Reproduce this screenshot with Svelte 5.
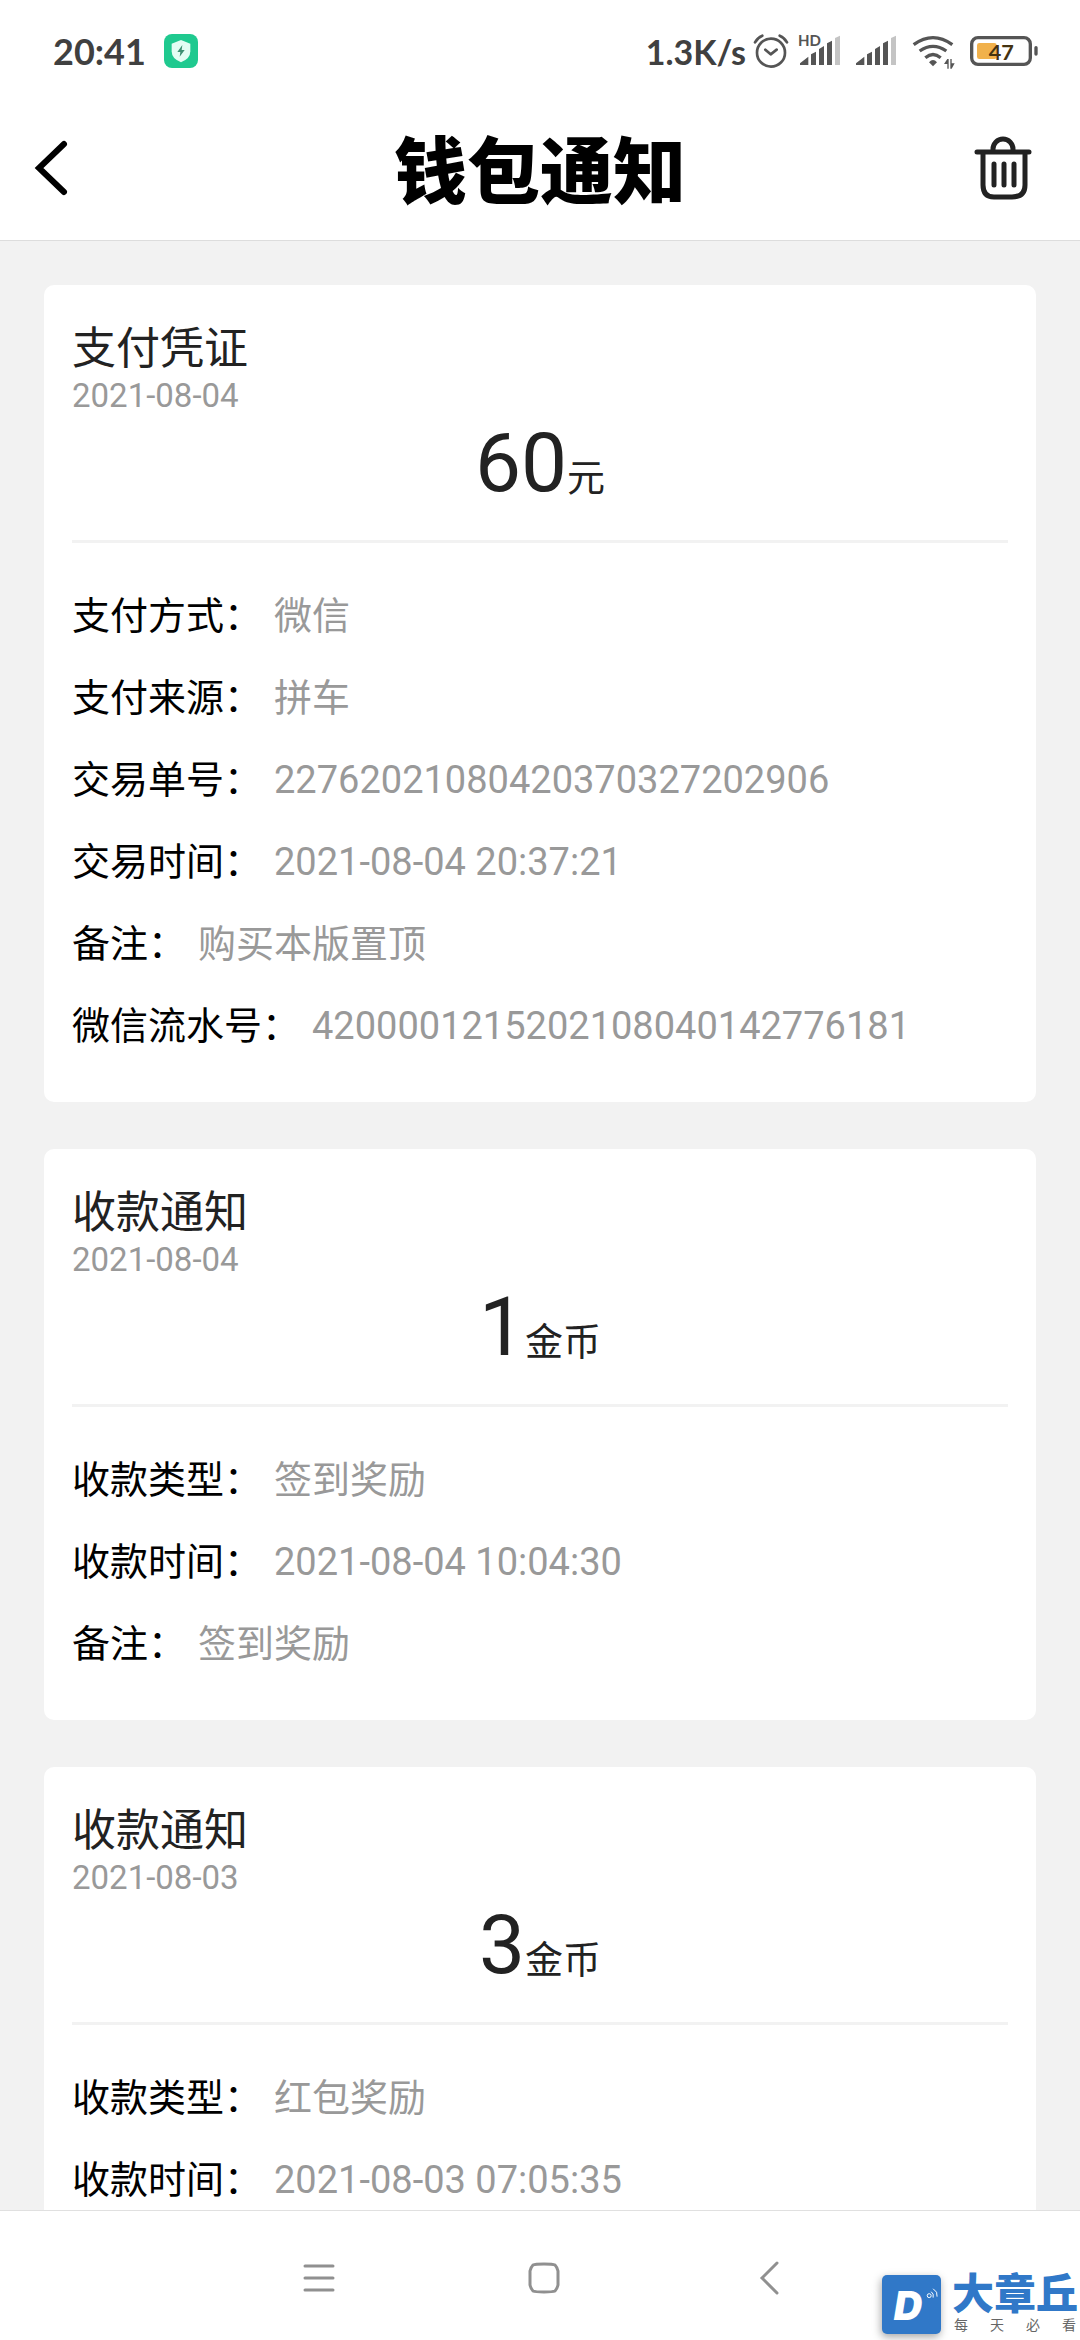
<script lang="ts">
	type Row = { label: string; value: string };
	type Notice = {
		title: string;
		date: string;
		amount: string;
		unit: string;
		rows: Row[];
	};

	const speed = '1.3K/s';
	const time = '20:41';
	const battery = 47;

	let notices: Notice[] = $state([
		{
			title: '支付凭证',
			date: '2021-08-04',
			amount: '60',
			unit: '元',
			rows: [
				{ label: '支付方式', value: '微信' },
				{ label: '支付来源', value: '拼车' },
				{ label: '交易单号', value: '22762021080420370327202906' },
				{ label: '交易时间', value: '2021-08-04 20:37:21' },
				{ label: '备注', value: '购买本版置顶' },
				{ label: '微信流水号', value: '4200001215202108040142776181' }
			]
		},
		{
			title: '收款通知',
			date: '2021-08-04',
			amount: '1',
			unit: '金币',
			rows: [
				{ label: '收款类型', value: '签到奖励' },
				{ label: '收款时间', value: '2021-08-04 10:04:30' },
				{ label: '备注', value: '签到奖励' }
			]
		},
		{
			title: '收款通知',
			date: '2021-08-03',
			amount: '3',
			unit: '金币',
			rows: [
				{ label: '收款类型', value: '红包奖励' },
				{ label: '收款时间', value: '2021-08-03 07:05:35' }
			]
		}
	]);

	const clearAll = () => {
		notices = [];
	};
	const goBack = () => {
		history.back();
	};
</script>

{#snippet signal(hd: boolean)}
	<svg class="signal" viewBox="0 0 126 108">
		{#if hd}
			<text x="-6" y="38">HD</text>
		{/if}
		<path d="M0 91 25 71V96H0zM33 64 48 56V96H33zM57 48 72 39V96H57zM81 31 96 23V96H81z" />
		<path class="weak" d="M105 15 120 8V96H105z" />
	</svg>
{/snippet}

<div class="screen" lang="zh-CN">
	<div class="status">
		<div class="status_left">
			<span>{time}</span>
			<svg class="guard" viewBox="0 0 102 102">
				<rect width="102" height="102" rx="24" fill="#1fc98f" />
				<path d="M51 18 79 29V52Q79 74 51 85 23 74 23 52V29z" fill="#e4fdf3" />
				<path d="M55 33 40 54H49L47 68 62 48H53z" fill="#3f8f72" />
			</svg>
		</div>
		<div class="status_right">
			<span class="status_speed">{speed}</span>
			<div class="status_icons">
				<svg class="alarm" viewBox="0 0 102 108">
					<circle cx="57" cy="59" r="42" />
					<path d="M40 50 56 64 74 50M9 28Q16 14 31 8M83 8Q98 14 105 28" />
				</svg>
				{@render signal(true)}
				{@render signal(false)}
				<svg class="wifi" viewBox="0 0 132 108">
					<path class="arc" d="M5 35Q63 -7 121 35M23 54Q63 26 103 54M40 74Q63 55 86 74" />
					<path d="M51 88Q63 74 75 88L63 100z" />
					<path d="M106 78H110V107H106V93H96zM115 78H119V91H128L119 107H115z" />
				</svg>
				<svg class="battery" viewBox="0 0 204 108">
					<rect class="shell" x="5" y="14" width="176" height="80" rx="19" />
					<rect x="21" y="30" width="59" height="48" rx="7" fill="#f1b14b" />
					<rect x="193" y="39" width="10" height="29" rx="5" fill="#555" />
					<text x="56" y="81">{battery}</text>
				</svg>
			</div>
		</div>
	</div>

	<header class="header">
		<button class="header_back" aria-label="返回" onclick={goBack}>
			<svg width="32" height="54" viewBox="0 0 32 54">
				<path d="M28 3 3 27 28 51" />
			</svg>
		</button>
		<h1>钱包通知</h1>
		<button class="header_clear" aria-label="清空" onclick={clearAll}>
			<svg width="58" height="64" viewBox="0 0 58 64">
				<path d="M3 16H55M19 16V13A10 10 0 0 1 39 13V16" />
				<path d="M9 17V49Q9 61 20 61H38Q51 61 51 49V17" />
				<path d="M20 28V49M30 28V49M40 28V49" />
			</svg>
		</button>
	</header>

	<main class="list">
		{#each notices as notice}
			<article class="card">
				<h2>{notice.title}</h2>
				<time datetime={notice.date}>{notice.date}</time>
				<p class="amount">{notice.amount}<span>{notice.unit}</span></p>
				<dl>
					{#each notice.rows as row}
						<div class="row">
							<dt>{row.label}：</dt>
							<dd>{row.value}</dd>
						</div>
					{/each}
				</dl>
			</article>
		{/each}
	</main>

	<nav class="nav">
		<button aria-label="任务">
			<svg width="34" height="34" viewBox="0 0 34 34"><path d="M3 5H31M3 17H31M3 29H31" /></svg>
		</button>
		<button aria-label="主页">
			<svg width="34" height="34" viewBox="0 0 34 34">
				<path d="M17 3Q26 3 28 4 30 6 31 10V24Q30 28 28 30 26 31 17 31 8 31 6 30 4 28 3 24V10Q4 6 6 4 8 3 17 3z" />
			</svg>
		</button>
		<button aria-label="返回">
			<svg width="34" height="34" viewBox="0 0 34 34"><path d="M25 2 10 17 25 32" /></svg>
		</button>
	</nav>

	<div class="brand">
		<svg class="brand_logo" viewBox="0 0 60 60">
			<text x="12" y="46">D</text>
			<circle cx="48" cy="21" r="2" />
			<path d="M50 17Q53 19 52 23M52 14Q57 17 56 22" />
		</svg>
		<div class="brand_text">
			<strong>大章丘</strong>
			<div class="brand_slogan">
				{#each '每天必看' as char}
					<span>{char}</span>
				{/each}
			</div>
		</div>
	</div>
</div>

<style>
	:global(body) {
		margin: 0;
	}
	.screen {
		position: relative;
		display: flex;
		flex-direction: column;
		height: 100vh;
		overflow: hidden;
		background-color: #f2f2f2;
		color: #222;
		font-family: Roboto, 'Noto Sans CJK SC', sans-serif;
	}
	h1,
	h2,
	p,
	dl,
	dd {
		margin: 0;
	}
	button {
		display: flex;
		align-items: center;
		padding: 0;
		border: none;
		background: none;
		cursor: pointer;
	}
	svg {
		display: block;
		fill: none;
		overflow: visible;
	}

	.status {
		display: flex;
		flex-shrink: 0;
		justify-content: space-between;
		align-items: center;
		height: 102px;
		padding: 0 42px 0 53px;
		background-color: white;
		color: #404040;
		font-family: Lato, sans-serif;
		font-size: 36px;
		font-weight: 700;
	}
	.status_left {
		display: flex;
		align-items: center;
		gap: 18px;
	}
	.status_right {
		display: flex;
		align-items: center;
		gap: 6px;
	}
	.status_speed {
		font-size: 34px;
	}
	.status_icons {
		display: flex;
		align-items: center;
		gap: 14px;
	}
	.status_icons svg {
		height: 36px;
	}
	.guard {
		width: 34px;
		height: 34px;
	}
	.alarm {
		width: 34px;
		stroke: #555;
		stroke-width: 8;
		stroke-linecap: round;
		stroke-linejoin: round;
	}
	.signal {
		width: 42px;
		fill: #555;
		font-size: 45px;
	}
	.signal .weak {
		fill: #c4c4c4;
	}
	.wifi {
		width: 44px;
		fill: #555;
	}
	.wifi .arc {
		fill: none;
		stroke: #555;
		stroke-width: 10;
	}
	.battery {
		width: 68px;
		fill: #443311;
		font-size: 65px;
	}
	.battery .shell {
		fill: none;
		stroke: #555;
		stroke-width: 10;
	}

	.header {
		display: grid;
		flex-shrink: 0;
		grid-template-columns: 1fr auto 1fr;
		align-items: center;
		height: 132px;
		padding: 0 36px 6px;
		border-bottom: 1px solid #ddd;
		background-color: white;
	}
	.header h1 {
		padding-top: 10px;
		color: black;
		font-size: 73px;
		font-weight: 900;
		line-height: 100px;
	}
	.header_back {
		justify-self: start;
	}
	.header_back svg {
		stroke: black;
		stroke-width: 6;
		stroke-linecap: round;
	}
	.header_clear {
		justify-self: end;
		padding: 0 12px;
	}
	.header_clear svg {
		stroke: #222;
		stroke-width: 5;
		stroke-linecap: round;
	}

	.list {
		display: flex;
		flex: 1;
		flex-direction: column;
		gap: 47px;
		min-height: 0;
		padding: 44px;
		overflow-y: auto;
		scrollbar-width: none;
	}
	.card {
		flex-shrink: 0;
		padding: 38px 28px 35px;
		border-radius: 10px;
		background-color: white;
	}
	.card h2 {
		font-size: 44px;
		font-weight: 400;
		line-height: 52px;
	}
	.card time {
		display: block;
		color: #999;
		font-size: 33px;
		line-height: 42px;
	}
	.amount {
		height: 123px;
		border-bottom: 3px solid #f2f2f2;
		font-size: 82px;
		line-height: 92px;
		text-align: center;
	}
	.amount span {
		font-size: 38px;
		line-height: 38px;
	}
	.card dl {
		padding-top: 32px;
	}
	.row {
		display: flex;
		gap: 12px;
		font-size: 38px;
		line-height: 82px;
	}
	.row dt {
		color: black;
	}
	.row dd {
		color: #999;
	}

	.nav {
		display: flex;
		flex-shrink: 0;
		justify-content: center;
		height: 125px;
		padding: 4px 0 0 8px;
		border-top: 1px solid #e0e0e0;
		background-color: white;
	}
	.nav button {
		justify-content: center;
		width: 225px;
	}
	.nav svg {
		stroke: #909090;
		stroke-width: 3;
		stroke-linecap: round;
	}

	.brand {
		position: absolute;
		right: 2px;
		bottom: 6px;
		display: flex;
		gap: 11px;
	}
	.brand_logo {
		width: 59px;
		height: 59px;
		border-radius: 5px;
		background-color: #3078c8;
		box-shadow: -1px 3px 8px rgba(0, 0, 0, 0.35);
		fill: white;
		font-family: Inter, sans-serif;
		font-size: 40px;
		font-style: italic;
		font-weight: 900;
	}
	.brand_logo circle,
	.brand_logo path {
		fill: none;
		stroke: white;
		stroke-width: 1;
	}
	.brand_text {
		display: flex;
		flex-direction: column;
		justify-content: space-between;
	}
	.brand_text strong {
		color: #3078c8;
		font-size: 42px;
		font-weight: 900;
		line-height: 40px;
	}
	.brand_slogan {
		display: flex;
		justify-content: space-between;
		padding: 0 2px;
		color: #666;
		font-size: 14px;
		line-height: 18px;
	}
</style>
